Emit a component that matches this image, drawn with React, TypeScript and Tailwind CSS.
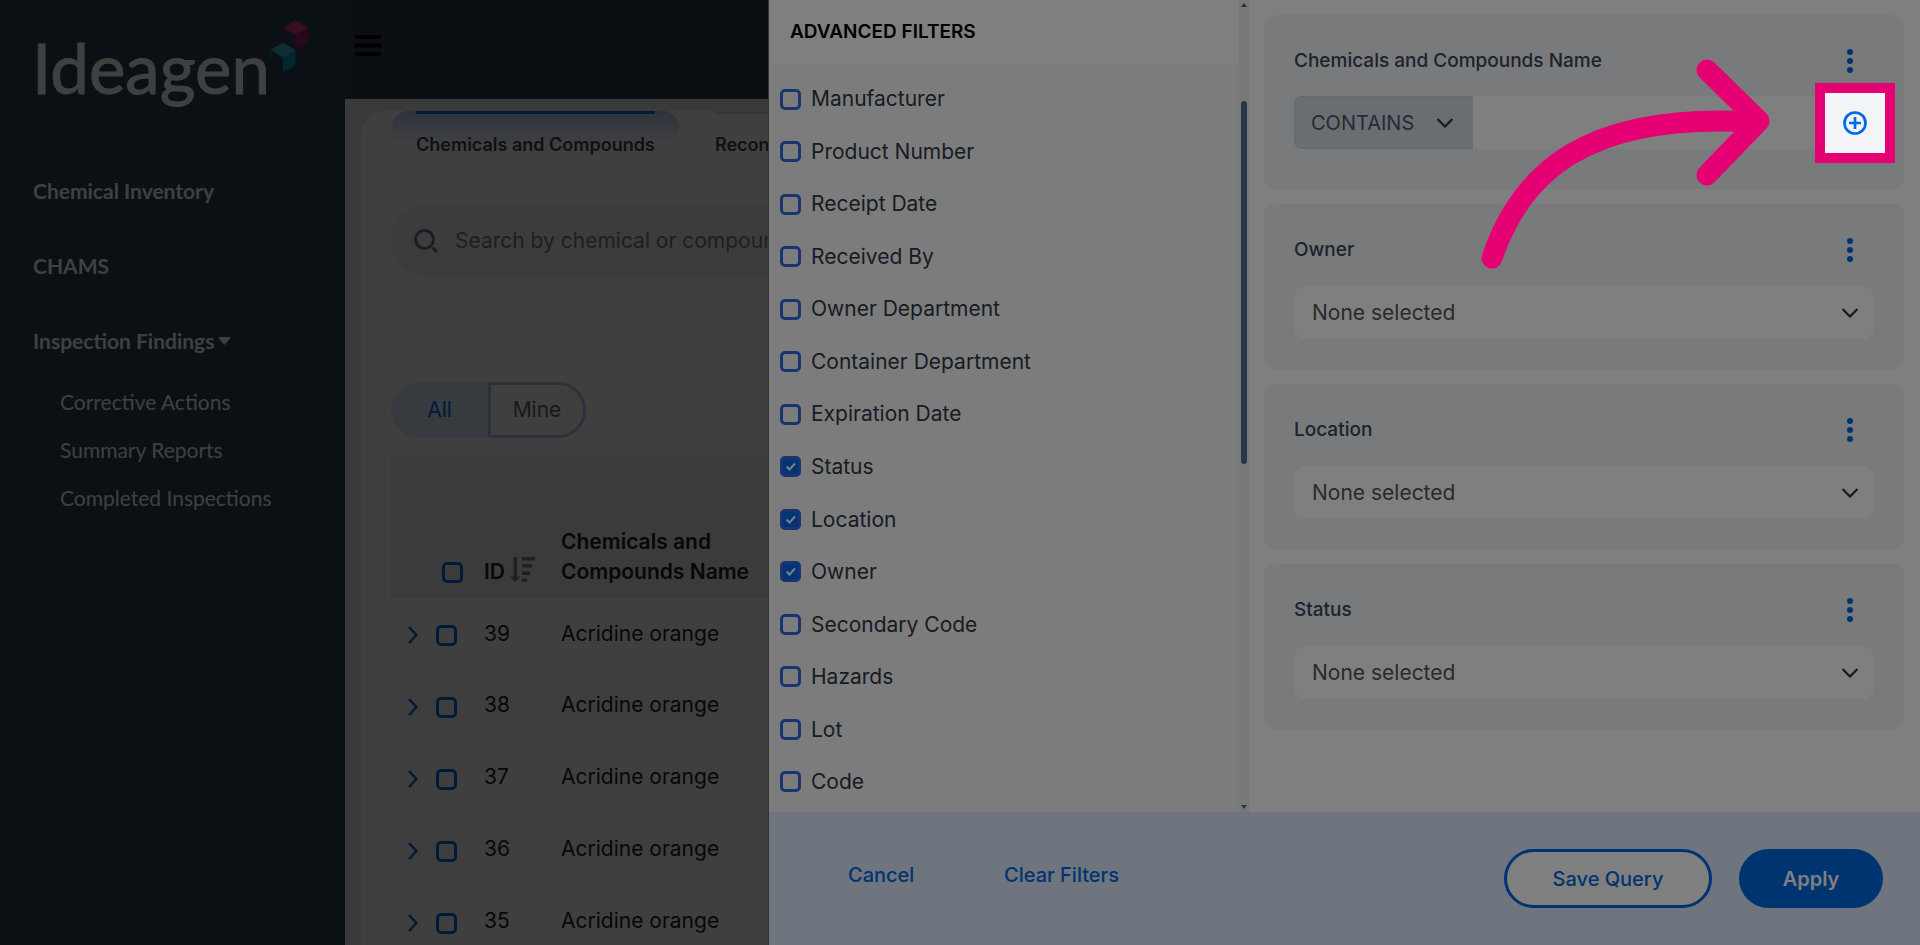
import React from "react";

const filterNames = [
  "Manufacturer",
  "Product Number",
  "Receipt Date",
  "Received By",
  "Owner Department",
  "Container Department",
  "Expiration Date",
  "Status",
  "Location",
  "Owner",
  "Secondary Code",
  "Hazards",
  "Lot",
  "Code",
];

const rows = [39, 38, 37, 36, 35].map((id) => ({ id, name: "Acridine orange" }));

const Logo = () => (
  <svg
    width="345"
    height="129"
    viewBox="0 0 345 129"
    role="img"
    aria-label="Ideagen"
  >
    <text
      x="32"
      y="94"
      fontFamily="Lato, sans-serif"
      fontSize="69"
      fill="#fff"
      stroke="#fff"
      strokeWidth="1"
    >
      Ideagen
    </text>
    <path d="M295.5 20 308 27.5 295.5 35 283 28z" fill="#dc3488" />
    <path d="M308 27.5V43l-12.5 7V35z" fill="#b01870" />
    <path d="M282.5 28v7" stroke="#b01870" />
    <path d="M283 42.5 295.500 50 283 57.500 270.500 50z" fill="#40b4cc" />
    <path d="M295.500 50v15.500L283 72.500v-15z" fill="#009cc0" />
    <path d="M270.500 50v8" stroke="#009cc0" />
  </svg>
);

const Chevron = ({ className = "" }: { className?: string }) => (
  <svg
    width="16"
    height="10"
    viewBox="0 0 16 10"
    fill="none"
    stroke="#2b323a"
    strokeWidth="2.2"
    className={`pointer-events-none absolute top-1/2 -translate-y-1/2 ${className}`}
  >
    <path d="M.5 1 8 8.500 15.500 1" />
  </svg>
);

const Sidebar = () => (
  <aside className="w-[345px] shrink-0 bg-[#28404c] font-['Lato',sans-serif] text-white">
    <Logo />
    <nav className="pt-6 text-[21px]">
      {["Chemical Inventory", "CHAMS"].map((item) => (
        <a
          key={item}
          href="#"
          className="flex h-[75px] items-center pl-[33px] font-bold"
        >
          {item}
        </a>
      ))}
      <a
        href="#"
        className="flex h-[75px] items-center gap-1 pl-[33px] font-bold"
      >
        Inspection Findings
        <svg width="13" height="8" viewBox="0 0 13 8" fill="currentColor">
          <path d="M1 0h11q1 0 .5 1L7 7.500q-.5.5-1 0L.5 1Q0 0 1 0z" />
        </svg>
      </a>
      {["Corrective Actions", "Summary Reports", "Completed Inspections"].map(
        (item) => (
          <a key={item} href="#" className="flex h-12 items-center pl-[60px]">
            {item}
          </a>
        )
      )}
    </nav>
  </aside>
);

const TableCheckbox = ({ label }: { label: string }) => (
  <input
    type="checkbox"
    aria-label={label}
    className="block size-[21px] appearance-none rounded-[5px] border-3 border-[#0068e0]"
  />
);

const Inventory = () => (
  <div className="flex min-w-0 flex-1 flex-col bg-[#e9e9e9]">
    <header className="h-[99px] shrink-0 bg-[#2c384c] pt-[35px] pl-[10px]">
      <button type="button" aria-label="Menu" className="block">
        <svg width="26" height="21" viewBox="0 0 26 21">
          <path d="M0 0h26v4H0zM0 8.500h26v4H0zM0 17h26v4H0z" />
        </svg>
      </button>
    </header>
    <main className="mt-3 ml-4 min-h-0 flex-1 overflow-hidden rounded-tl-3xl bg-white pl-[30px]">
      <div className="ml-px flex gap-3 text-lg font-semibold text-[#3c4656]">
        <button
          type="button"
          className="rounded-t-2xl bg-linear-to-b from-[#b4cff0] to-white to-50% px-6 pb-4"
        >
          <span className="block border-t-3 border-[#0068e0] pt-[17px]">
            Chemicals and Compounds
          </span>
        </button>
        <button type="button" className="flex-1 px-6 pb-4 text-left">
          <span className="block border-t-3 border-[#e2e2e2] pt-[17px]">
            Recon
          </span>
        </button>
      </div>

      <label className="mt-[30px] flex h-[72px] items-center gap-[17px] rounded-l-full bg-[#eef3ef] pl-[23px]">
        <svg
          width="24"
          height="24"
          viewBox="0 0 24 24"
          fill="none"
          stroke="#6c7a9c"
          strokeWidth="3"
        >
          <circle cx="10.500" cy="10.500" r="9" />
          <path d="M18.500 18.500 23 23" />
        </svg>
        <input
          type="text"
          aria-label="Search"
          placeholder="Search by chemical or compound name"
          className="flex-1 bg-transparent text-[21px] outline-none placeholder:text-[#707c98]"
        />
      </label>

      <div className="mt-[105px] flex h-14 text-[21px]">
        <button
          type="button"
          className="w-[97px] rounded-l-full bg-[#dcecff] text-[#0068e0]"
        >
          All
        </button>
        <button
          type="button"
          className="w-[98px] rounded-r-full border-3 border-[#a8c8f0] text-[#5c6470]"
        >
          Mine
        </button>
      </div>

      <table className="mt-[18px] w-full table-fixed text-left text-[21px] text-[#222]">
        <colgroup>
          <col className="w-[93px]" />
          <col className="w-[77px]" />
          <col />
        </colgroup>
        <thead>
          <tr className="h-[141px] border-b border-[#d8dce0] bg-[#eeeef2] align-bottom leading-[30px]">
            <th className="pb-[14px] pl-[51px]">
              <TableCheckbox label="Select all" />
            </th>
            <th className="pb-[10px] font-semibold">
              <span className="flex items-center gap-[5px]">
                ID
                <svg
                  width="25"
                  height="25"
                  viewBox="0 0 25 25"
                  fill="#7c8088"
                  className="mb-1 shrink-0"
                >
                  <path d="M3.500 0h3.500v19.500h3.500L5.250 25 0 19.500h3.500zM12 0h13v3.500H12zM12 7h10v3.500H12zM12 14.500h8V18h-8zM12 21.500h5V25h-5z" />
                </svg>
              </span>
            </th>
            <th className="pb-[10px] font-semibold">
              <span className="block w-[200px]">
                Chemicals and Compounds Name
              </span>
            </th>
          </tr>
        </thead>
        <tbody>
          {rows.map((row) => (
            <tr key={row.id} className="h-[72px] even:bg-[#fafafa]">
              <td className="pl-[17px]">
                <div className="flex items-center gap-[18px] pt-1">
                  <button type="button" aria-label={`Expand ${row.id}`}>
                    <svg
                      width="10"
                      height="18"
                      viewBox="0 0 10 18"
                      fill="none"
                      stroke="#0068e0"
                      strokeWidth="2.500"
                    >
                      <path d="M1 1l7.500 8L1 17" />
                    </svg>
                  </button>
                  <TableCheckbox label={`Select ${row.id}`} />
                </div>
              </td>
              <td>{row.id}</td>
              <td>{row.name}</td>
            </tr>
          ))}
        </tbody>
      </table>
    </main>
  </div>
);

const FilterList = () => {
  const [checked, setChecked] = React.useState(["Status", "Location", "Owner"]);

  const toggle = (name: string) =>
    setChecked((prev) =>
      prev.includes(name) ? prev.filter((n) => n !== name) : [...prev, name]
    );

  return (
    <div className="flex w-[480px] shrink-0">
      <div className="flex flex-1 flex-col">
        <h2 className="flex h-16 shrink-0 items-center bg-white pl-[21px] text-[19px] font-semibold text-black">
          ADVANCED FILTERS
        </h2>
        <div className="flex min-h-0 flex-1 flex-col justify-between overflow-hidden bg-[#f8f8fb] pt-5 pb-[15px] pl-[11px]">
          {filterNames.map((name) => (
            <label
              key={name}
              className="flex h-[30px] items-center gap-[10px] text-[21px] text-[#2e3846]"
            >
              <span className="relative">
                <input
                  type="checkbox"
                  checked={checked.includes(name)}
                  onChange={() => toggle(name)}
                  className="peer block size-[21px] appearance-none rounded-[5px] border-3 border-[#3468e0] checked:bg-[#0068f0]"
                />
                <svg
                  viewBox="0 0 21 21"
                  fill="none"
                  stroke="#fff"
                  strokeWidth="2"
                  className="pointer-events-none absolute inset-0 hidden peer-checked:block"
                >
                  <path d="M6.500 10.500l3 3 5.500-6" />
                </svg>
              </span>
              {name}
            </label>
          ))}
        </div>
      </div>
      <div className="flex w-[10px] flex-col items-center bg-[#f1f1f1] py-[3px]">
        <svg width="6" height="4" fill="#4a6c92">
          <path d="M3 0l3 4H0z" />
        </svg>
        <div className="mt-[94px] h-[45%] w-[6px] rounded-full bg-[#4a6c92]" />
        <svg width="6" height="4" fill="#4a6c92" className="mt-auto">
          <path d="M0 0h6L3 4z" />
        </svg>
      </div>
    </div>
  );
};

const CardHeader = ({ title, id }: { title: string; id: string }) => (
  <div className="flex h-8 items-center justify-between">
    <label htmlFor={id} className="text-[19px] font-medium text-[#3a4658]">
      {title}
    </label>
    <button type="button" aria-label={`${title} options`} className="mr-[21px]">
      <svg width="6" height="24" viewBox="0 0 6 24" fill="#0068e0">
        <circle cx="3" cy="3" r="3" />
        <circle cx="3" cy="12" r="3" />
        <circle cx="3" cy="21" r="3" />
      </svg>
    </button>
  </div>
);

// Pink frame and arrow of the tour step, everything outside the frame is dimmed
const TourHighlight = () => (
  <>
    <span className="pointer-events-none absolute -inset-[11px] z-50 shadow-[0_0_0_10px_#e50073,0_0_0_4000px_rgba(0,0,0,0.5)]" />
    <svg
      width="292"
      height="212"
      viewBox="1480 58 292 212"
      fill="none"
      stroke="#e50073"
      strokeWidth="21"
      strokeLinecap="round"
      strokeLinejoin="round"
      className="pointer-events-none absolute -top-[46px] right-full z-50 mr-[65px] max-w-none"
    >
      <path d="M1493 258C1522 172 1588 112 1755 122" />
      <path d="M1708 70l52 51-52 54" />
    </svg>
  </>
);

const NameCard = () => (
  <section className="rounded-xl bg-[#f2f4f8] px-[30px] pt-[30px] pb-10">
    <CardHeader title="Chemicals and Compounds Name" id="name" />
    <div className="mt-[19px] flex h-[53px] items-center gap-4">
      <div className="flex h-full min-w-0 flex-1">
        <div className="relative w-[179px] shrink-0">
          <select
            aria-label="Condition"
            className="size-full appearance-none rounded-l-lg border border-r-0 border-[#c6d2de] bg-[#d5dce6] pl-4 text-xl text-[#4a5666]"
          >
            <option>CONTAINS</option>
          </select>
          <Chevron className="right-5" />
        </div>
        <input
          id="name"
          type="text"
          className="min-w-0 flex-1 bg-white px-4 text-xl outline-none"
        />
      </div>
      <button
        type="button"
        aria-label="Add condition"
        className="relative flex size-[38px] items-center justify-center"
      >
        <svg
          width="24"
          height="24"
          viewBox="0 0 24 24"
          fill="none"
          stroke="#0069e8"
          strokeWidth="2.700"
        >
          <circle cx="12" cy="12" r="10.500" />
          <path d="M12 6v12M6 12h12" />
        </svg>
        <TourHighlight />
      </button>
    </div>
  </section>
);

const SelectCard = ({ title }: { title: string }) => (
  <section className="rounded-xl bg-[#f2f4f8] p-[30px]">
    <CardHeader title={title} id={title} />
    <div className="relative mt-5 h-[53px]">
      <select
        id={title}
        className="size-full appearance-none rounded-xl bg-white pl-[18px] text-[21px] text-[#555]"
      >
        <option>None selected</option>
      </select>
      <Chevron className="right-4" />
    </div>
  </section>
);

const FilterDrawer = () => (
  <div className="fixed inset-y-0 right-0 z-40 flex w-[60%] flex-col border-l border-[#666] bg-white">
    <div className="flex min-h-0 flex-1">
      <FilterList />
      <div className="flex min-w-0 flex-1 flex-col gap-[15px] py-[15px] pr-4 pl-[15px]">
        <NameCard />
        <SelectCard title="Owner" />
        <SelectCard title="Location" />
        <SelectCard title="Status" />
      </div>
    </div>
    <footer className="flex h-[133px] shrink-0 items-center justify-between bg-[#dceafe] pr-[37px] pl-[79px] text-xl font-medium text-[#0068e0]">
      <div className="flex pb-2">
        <button type="button" className="w-[156px] text-left">
          Cancel
        </button>
        <button type="button">Clear Filters</button>
      </div>
      <div className="flex gap-[27px]">
        <button
          type="button"
          className="h-[59px] w-52 rounded-full border-3 border-[#0068e0] bg-white"
        >
          Save Query
        </button>
        <button
          type="button"
          className="h-[59px] w-36 rounded-full bg-[#0068e0] font-semibold text-white"
        >
          Apply
        </button>
      </div>
    </footer>
  </div>
);

const App = () => {
  return (
    <div className="flex h-screen overflow-hidden font-['Inter',sans-serif]">
      <Sidebar />
      <Inventory />
      <div className="fixed inset-0 z-30 bg-black/50" />
      <FilterDrawer />
    </div>
  );
};

export default App;
